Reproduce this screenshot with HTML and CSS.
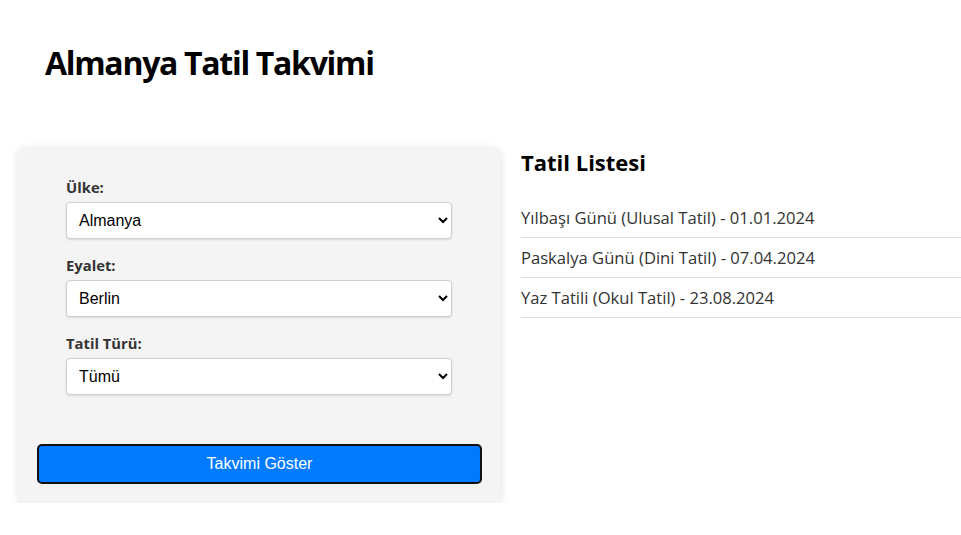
FILE: index.html
```html
<!DOCTYPE html>
<html lang="tr">
<head>
<meta charset="utf-8">
<title>Almanya Tatil Takvimi</title>
<link rel="stylesheet" href="styles.css">
</head>
<body>
<header class="header">
  <h1 class="title">Almanya Tatil Takvimi</h1>
</header>
<main class="main">
  <section class="panel">
    <form class="form">
      <div class="group">
        <label class="label" for="ulke">Ülke:</label>
        <select class="select" id="ulke"><option>Almanya</option></select>
      </div>
      <div class="group">
        <label class="label" for="eyalet">Eyalet:</label>
        <select class="select" id="eyalet"><option>Berlin</option></select>
      </div>
      <div class="group">
        <label class="label" for="tur">Tatil Türü:</label>
        <select class="select" id="tur"><option>Tümü</option></select>
      </div>
      <button type="button" class="button">Takvimi Göster</button>
    </form>
  </section>
  <section class="list-section">
    <h2 class="list-title">Tatil Listesi</h2>
    <ul class="list">
      <li class="item">Yılbaşı Günü (Ulusal Tatil) - 01.01.2024</li>
      <li class="item">Paskalya Günü (Dini Tatil) - 07.04.2024</li>
      <li class="item">Yaz Tatili (Okul Tatil) - 23.08.2024</li>
    </ul>
  </section>
</main>
</body>
</html>
```
FILE: styles.css
```css
html, body {
  margin: 0;
  padding: 0;
  background: #ffffff;
}
body {
  font-family: "Open Sans", "Noto Sans", "DejaVu Sans", sans-serif;
  color: #000;
}
.header {
  padding: 41px 0 0 45px;
}
.title {
  margin: 0;
  font-size: 32px;
  line-height: 44px;
  font-weight: 700;
  letter-spacing: -1.3px;
}
.main {
  display: flex;
  gap: 20px;
  padding-left: 18px;
  margin-top: 62px;
}
.panel {
  width: 483px;
  flex: none;
  box-sizing: border-box;
  background: #f4f4f4;
  border-radius: 8px;
  box-shadow: 0 2px 8px rgba(0, 0, 0, 0.12);
  padding: 30px 19px 19px;
}
.form {
  display: flex;
  flex-direction: column;
}
.group {
  display: flex;
  flex-direction: column;
  padding: 0 30px 0 29px;
  margin-bottom: 16px;
}
.label {
  font-size: 14.8px;
  font-weight: 700;
  color: #333;
  line-height: 20px;
  margin-bottom: 5px;
}
.select {
  height: 37px;
  box-sizing: border-box;
  border: 1px solid #cfcfcf;
  border-radius: 4px;
  background: #fff;
  box-shadow: 0 1px 2px rgba(0, 0, 0, 0.12);
  font-family: "Liberation Sans", Arial, sans-serif;
  font-size: 16px;
  color: #000;
  padding: 0 8px;
}
.button {
  margin-top: 33px;
  height: 40px;
  box-sizing: border-box;
  background: #007bff;
  border: 2px solid #111;
  border-radius: 5px;
  color: #fff;
  font-family: "Liberation Sans", Arial, sans-serif;
  font-size: 16px;
}
.list-section {
  flex: 1;
}
.list-title {
  margin: 0 0 21px;
  font-size: 22px;
  line-height: 30px;
  font-weight: 700;
}
.list {
  list-style: none;
  margin: 0;
  padding: 0;
}
.item {
  font-size: 16.6px;
  line-height: 20px;
  padding: 10px 0 9px;
  border-bottom: 1px solid #ddd;
  color: #333;
}
```
